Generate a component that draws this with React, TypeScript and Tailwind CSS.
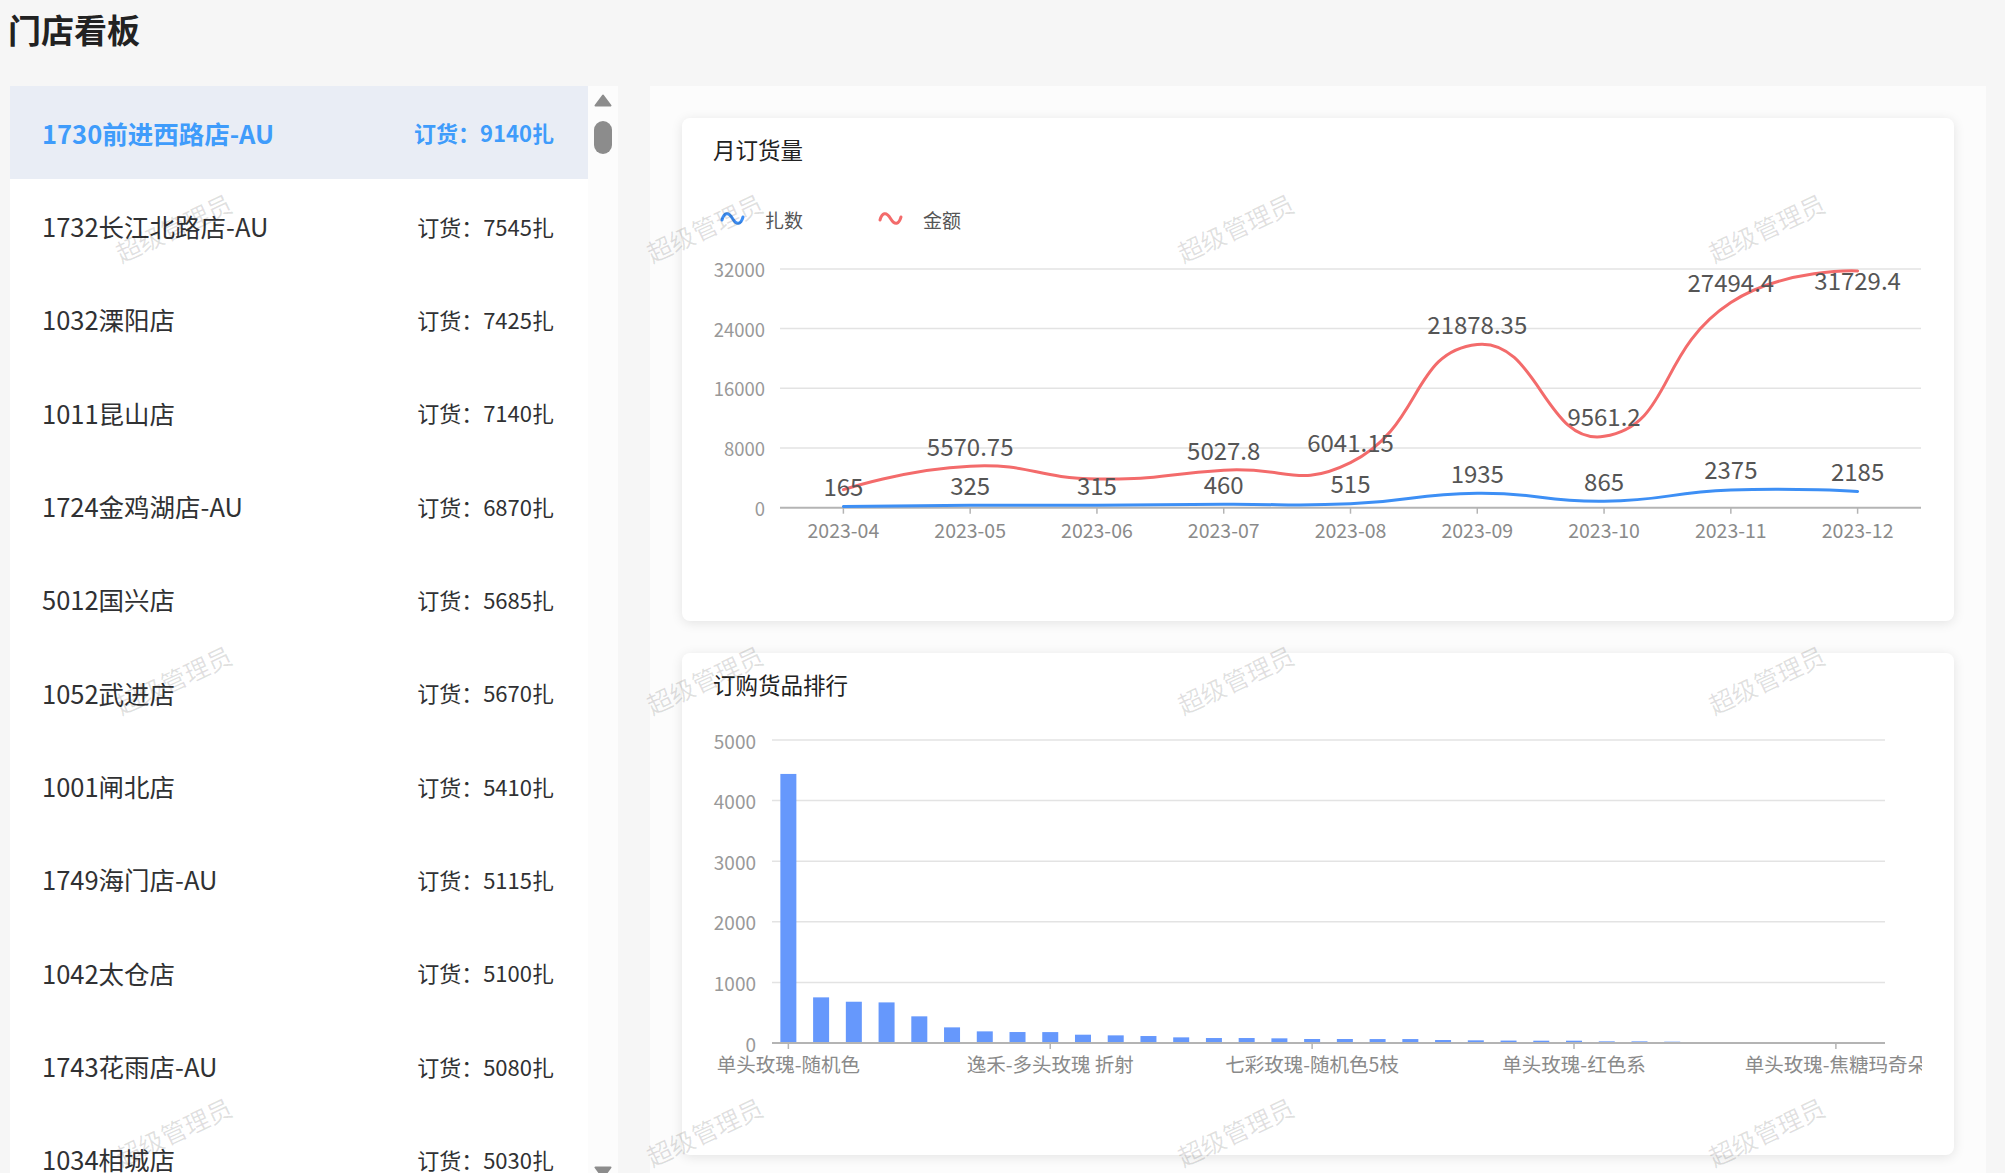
import React from 'react';

interface Store {
  name: string;
  amount: number;
}

const stores: Store[] = [
  { name: '1730前进西路店-AU', amount: 9140 },
  { name: '1732长江北路店-AU', amount: 7545 },
  { name: '1032溧阳店', amount: 7425 },
  { name: '1011昆山店', amount: 7140 },
  { name: '1724金鸡湖店-AU', amount: 6870 },
  { name: '5012国兴店', amount: 5685 },
  { name: '1052武进店', amount: 5670 },
  { name: '1001闸北店', amount: 5410 },
  { name: '1749海门店-AU', amount: 5115 },
  { name: '1042太仓店', amount: 5100 },
  { name: '1743花雨店-AU', amount: 5080 },
  { name: '1034相城店', amount: 5030 },
  { name: '1021吴江店', amount: 4980 },
];

const months = ['2023-04', '2023-05', '2023-06', '2023-07', '2023-08', '2023-09', '2023-10', '2023-11', '2023-12'];
const counts = [165, 325, 315, 460, 515, 1935, 865, 2375, 2185];
const amounts = [2413.5, 5570.75, 3846, 5027.8, 6041.15, 21878.35, 9561.2, 27494.4, 31729.4];
// echarts hid the overlapping ones; the last one sits under its point
const amountLabelDy = [null, -21, null, -21, -21, -21, -21, -21, 9];

const goods = [
  4440, 753, 681, 670, 440, 258, 192, 181, 180, 137, 126, 115, 93, 82, 82, 77, 66,
  66, 65, 65, 49, 44, 40, 38, 38, 27, 27, 22, 11, 11, 11, 11, 5, 5,
];
const goodsLabels: Record<number, string> = {
  0: '单头玫瑰-随机色',
  8: '逸禾-多头玫瑰 折射',
  16: '七彩玫瑰-随机色5枝',
  24: '单头玫瑰-红色系',
  32: '单头玫瑰-焦糖玛奇朵',
};

const FONT = "'Noto Sans CJK SC', 'Noto Sans', sans-serif";

// same idea as echarts smooth line: control points along (next - prev)
function smoothPath(pts: [number, number][], smooth = 0.5) {
  const n = pts.length;
  const cpIn: [number, number][] = [];
  const cpOut: [number, number][] = [];
  for (let i = 0; i < n; i++) {
    const p = pts[i];
    if (i === 0 || i === n - 1) {
      cpIn.push(p);
      cpOut.push(p);
      continue;
    }
    const prev = pts[i - 1];
    const next = pts[i + 1];
    const vx = next[0] - prev[0];
    const vy = next[1] - prev[1];
    const d0 = Math.hypot(p[0] - prev[0], p[1] - prev[1]);
    const d1 = Math.hypot(next[0] - p[0], next[1] - p[1]);
    const s = d0 + d1 || 1;
    cpIn.push([p[0] - vx * smooth * (d0 / s), p[1] - vy * smooth * (d0 / s)]);
    cpOut.push([p[0] + vx * smooth * (d1 / s), p[1] + vy * smooth * (d1 / s)]);
  }
  let d = `M${pts[0][0]},${pts[0][1]}`;
  for (let i = 1; i < n; i++) {
    d += ` C${cpOut[i - 1][0]},${cpOut[i - 1][1]} ${cpIn[i][0]},${cpIn[i][1]} ${pts[i][0]},${pts[i][1]}`;
  }
  return d;
}

function Wave({ color }: { color: string }) {
  return (
    <path
      d="M0,8 C2,1 6,-1 10.5,6.5 C15,14 19,12 21,5"
      fill="none"
      stroke={color}
      strokeWidth={3}
      strokeLinecap="round"
    />
  );
}

function MonthChart() {
  const left = 98;
  const right = 1239;
  const zeroY = 325.7;
  const step = 59.7;
  const band = (right - left) / months.length;
  const cx = (i: number) => left + band / 2 + i * band;
  const y = (v: number) => zeroY - (v / 8000) * step;
  const blue = counts.map((v, i) => [cx(i), y(v)] as [number, number]);
  const red = amounts.map((v, i) => [cx(i), y(v)] as [number, number]);

  return (
    <svg width={1272} height={437} className="block" fontFamily={FONT}>
      {/* legend */}
      <g transform="translate(40,30)">
        <Wave color="#3d8ff5" />
      </g>
      <text x={83} y={37} fontSize={19} fill="#555" dominantBaseline="central">扎数</text>
      <g transform="translate(198,30)">
        <Wave color="#f36b6b" />
      </g>
      <text x={241} y={37} fontSize={19} fill="#555" dominantBaseline="central">金额</text>

      {[0, 8000, 16000, 24000, 32000].map((v) => (
        <g key={v}>
          {v > 0 && <line x1={left} x2={right} y1={y(v)} y2={y(v)} stroke="#e3e3e3" strokeWidth={1.5} />}
          <text x={83} y={y(v)} fontSize={18.5} fill="#999" textAnchor="end" dominantBaseline="central">
            {v}
          </text>
        </g>
      ))}
      <line x1={left} x2={right} y1={zeroY} y2={zeroY} stroke="#b4b4b4" strokeWidth={2} />
      {months.map((m, i) => (
        <g key={m}>
          <line x1={cx(i)} x2={cx(i)} y1={zeroY} y2={zeroY + 6} stroke="#b4b4b4" strokeWidth={1.5} />
          <text x={cx(i)} y={347} fontSize={19.5} fill="#8a8a8a" textAnchor="middle" dominantBaseline="central">
            {m}
          </text>
        </g>
      ))}

      <path d={smoothPath(blue)} fill="none" stroke="#3d8ff5" strokeWidth={3} strokeLinecap="round" />
      <path d={smoothPath(red)} fill="none" stroke="#f36b6b" strokeWidth={3} strokeLinecap="round" />

      {counts.map((v, i) => (
        <text key={'c' + i} x={cx(i)} y={y(v) - 21} fontSize={24} fill="#555" textAnchor="middle" dominantBaseline="central">
          {v}
        </text>
      ))}
      {amounts.map((v, i) => {
        const dy = amountLabelDy[i];
        if (dy === null) return null;
        return (
          <text key={'a' + i} x={cx(i)} y={y(v) + dy} fontSize={24} fill="#555" textAnchor="middle" dominantBaseline="central">
            {v}
          </text>
        );
      })}
    </svg>
  );
}

function GoodsChart() {
  const left = 90;
  const right = 1203;
  const zeroY = 326;
  const step = 60.6;
  const band = (right - left) / goods.length;
  const cx = (i: number) => left + band / 2 + i * band;
  const y = (v: number) => zeroY - (v / 1000) * step;

  return (
    <svg width={1240} height={438} className="block" fontFamily={FONT}>
      {[0, 1000, 2000, 3000, 4000, 5000].map((v) => (
        <g key={v}>
          {v > 0 && <line x1={left} x2={right} y1={y(v)} y2={y(v)} stroke="#e3e3e3" strokeWidth={1.5} />}
          <text x={74} y={y(v)} fontSize={19} fill="#999" textAnchor="end" dominantBaseline="central">
            {v}
          </text>
        </g>
      ))}
      {goods.map((v, i) => (
        <rect key={i} x={cx(i) - 8} y={y(v)} width={16} height={zeroY - y(v)} fill="#6698fc" />
      ))}
      <line x1={left} x2={right} y1={zeroY} y2={zeroY} stroke="#b4b4b4" strokeWidth={2} />
      {Object.entries(goodsLabels).map(([k, label]) => {
        const i = Number(k);
        return (
          <g key={k}>
            <line x1={cx(i)} x2={cx(i)} y1={zeroY} y2={zeroY + 6} stroke="#b4b4b4" strokeWidth={1.5} />
            <text x={cx(i)} y={346} fontSize={19.5} fill="#8a8a8a" textAnchor="middle" dominantBaseline="central">
              {label}
            </text>
          </g>
        );
      })}
    </svg>
  );
}

export default function App() {
  return (
    <div className="relative h-screen w-full overflow-hidden bg-[#f6f6f6] font-['Noto_Sans_CJK_SC','Noto_Sans',sans-serif]">
      <h1 className="h-[86px] pl-[8px] pt-[9px] text-[33px] font-bold leading-[40px] text-[#222]">门店看板</h1>

      <div className="flex h-[1101px]">
        {/* store list */}
        <div className="ml-[10px] w-[578px] overflow-hidden bg-white">
          {stores.map((store, idx) => (
            <div
              key={store.name}
              className={`flex h-[93.35px] items-center justify-between pl-[32px] pr-[34px] ${
                idx === 0 ? 'bg-[#e9edf5] font-bold text-[#3f9cfb]' : 'text-[#303133]'
              }`}
            >
              <span className="text-[25.5px]">{store.name}</span>
              <span className="text-[22px]">订货：{store.amount}扎</span>
            </div>
          ))}
        </div>

        {/* scrollbar */}
        <div className="flex w-[30px] flex-col items-center bg-[#fcfcfc]">
          <svg width={18} height={13} className="mt-[8px]">
            <path d="M9,1.5 L16.5,11.5 L1.5,11.5 Z" fill="#8c8c8c" stroke="#8c8c8c" strokeWidth={2} strokeLinejoin="round" />
          </svg>
          <div className="mt-[14px] h-[33px] w-[18px] rounded-full bg-[#8c8c8c]" />
          <svg width={18} height={13} className="mb-[8px] mt-auto">
            <path d="M1.5,1.5 L16.5,1.5 L9,11.5 Z" fill="#8c8c8c" stroke="#8c8c8c" strokeWidth={2} strokeLinejoin="round" />
          </svg>
        </div>

        {/* charts */}
        <div className="ml-[32px] flex w-[1336px] flex-col gap-8 bg-[#fcfcfc] p-8">
          <div className="flex-1 overflow-hidden rounded-lg bg-white shadow-[0_2px_12px_0_rgba(0,0,0,0.1)]">
            <div className="flex h-[64px] items-center px-[31px] text-[22.5px] text-[#222]">月订货量</div>
            <MonthChart />
          </div>
          <div className="flex-1 overflow-hidden rounded-lg bg-white shadow-[0_2px_12px_0_rgba(0,0,0,0.1)]">
            <div className="flex h-[64px] items-center px-[31px] text-[22.5px] text-[#222]">订购货品排行</div>
            <GoodsChart />
          </div>
        </div>
      </div>

      {/* watermark */}
      <div className="pointer-events-none absolute left-[-92px] top-[2px] grid grid-cols-[repeat(4,531px)] grid-rows-[repeat(3,452px)] place-items-center">
        {Array.from({ length: 12 }).map((_, i) => (
          <span key={i} className="-rotate-[25deg] whitespace-nowrap text-[25px] text-black/[0.12]">
            超级管理员
          </span>
        ))}
      </div>
    </div>
  );
}
